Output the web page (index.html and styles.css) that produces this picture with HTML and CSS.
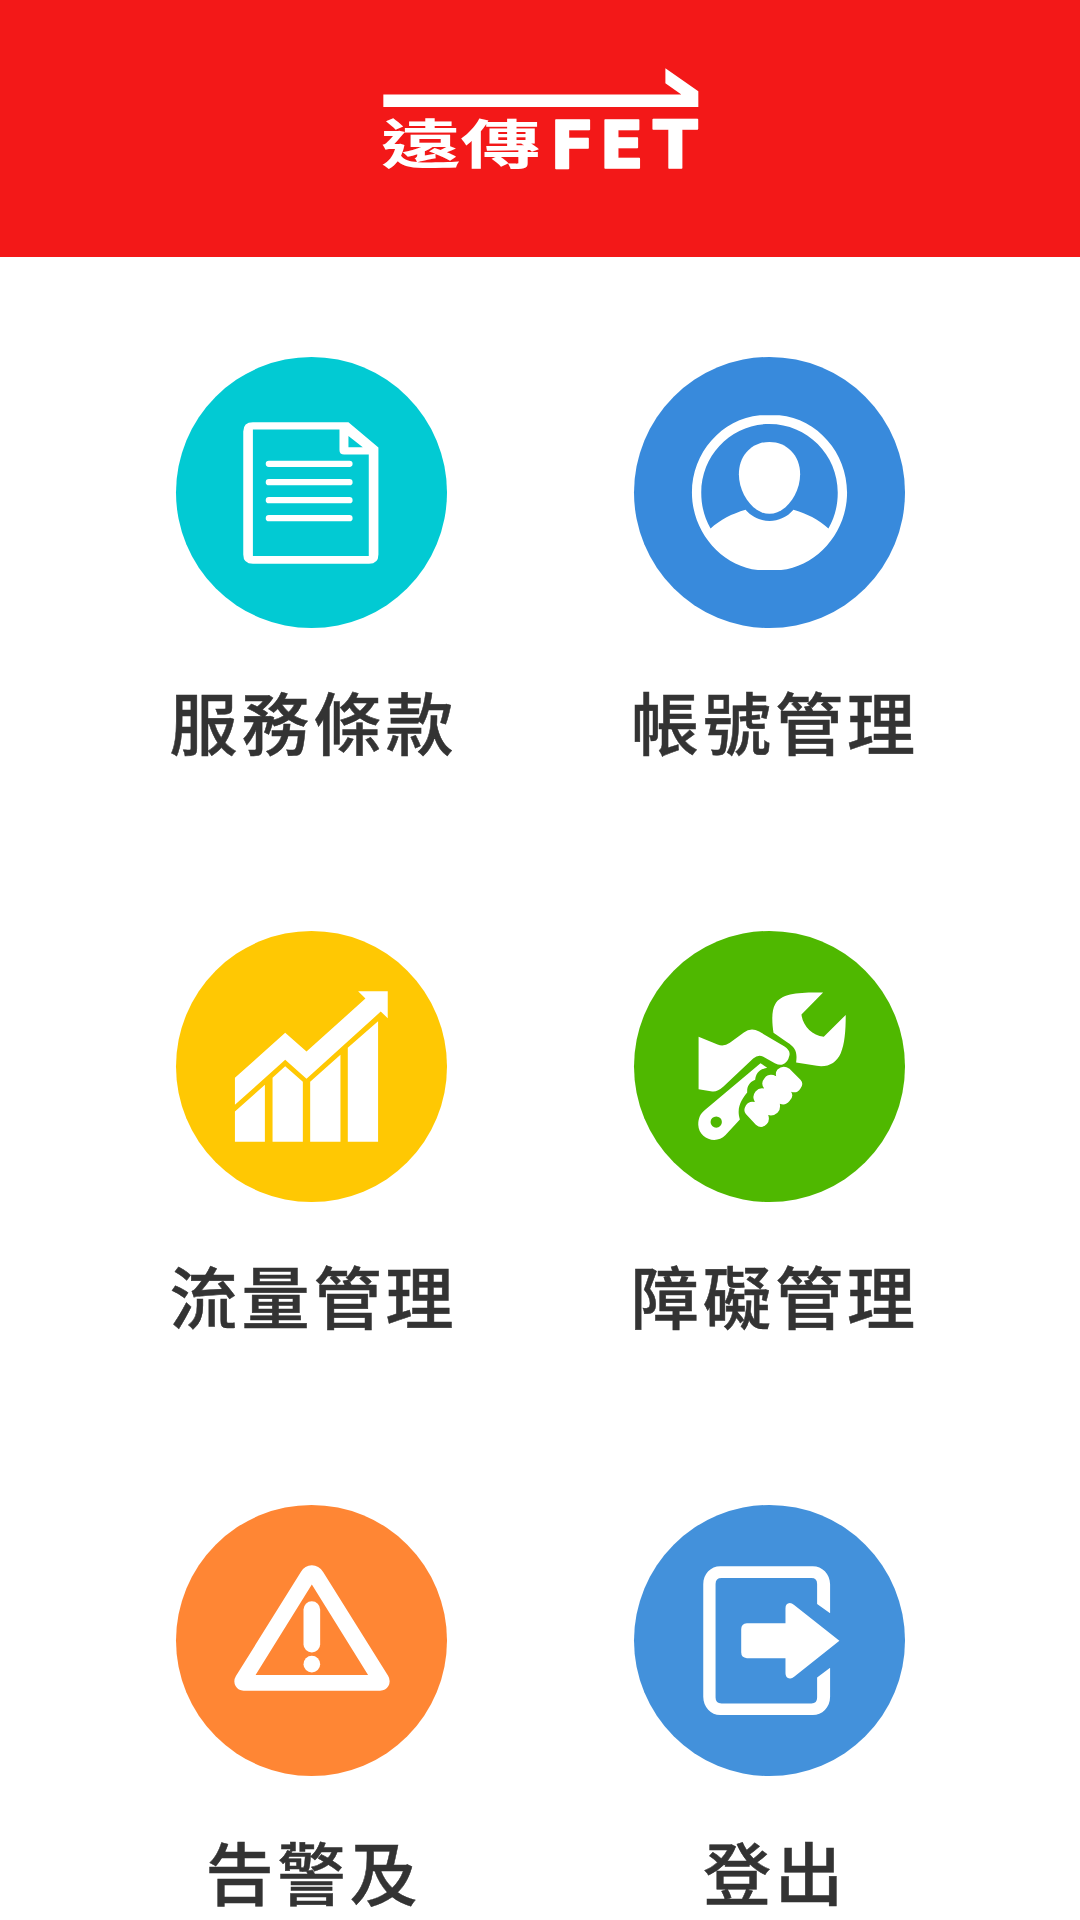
FILE: index.html
```html
<!DOCTYPE html>
<html lang="zh-Hant">
<head>
    <meta charset="UTF-8">
    <meta name="viewport" content="width=device-width, initial-scale=1">
    <title>遠傳 FET</title>
    <link rel="stylesheet" href="styles.css">
</head>
<body>
    <header class="header">
        <svg class="logo" viewBox="60 0 960 460" role="img" aria-label="遠傳 FET">
            <path d="M69 131H965L917 97V52L1016 121V168H69z"/>
            <text class="logo-zh" transform="translate(61 341) scale(1.48 1)" x="0" y="0">遠傳</text>
            <text class="logo-en" x="570 718 880" y="353">FET</text>
        </svg>
    </header>
    <main class="menu">
        <a class="item">
            <svg class="icon terms" viewBox="49 50 814 814">
                <path fill-rule="evenodd" d="M280 246H567L657 322V643Q657 671 629 671H280Q251 671 251 643V274Q251 246 280 246zM280 268V648H628V343H554Q540 343 540 329V268zM567 287V321H610z"/>
                <path class="line" d="M328 371H570M328 426H570M328 480H570M328 534H570"/>
            </svg>
            <span class="label">服務條款</span>
        </a>
        <a class="item">
            <svg class="icon account" viewBox="43 50 814 814">
                <path fill-rule="evenodd" d="M421 225H480C594 236 683 338 683 457S594 678 485 690H415C306 678 217 576 217 457S306 236 421 225zM450 251C337 251 245 343 245 457C245 496 254 533 273 565C302 539 337 521 378 509C416 553 484 554 522 509C561 520 597 538 627 565C646 533 655 496 655 457C655 343 563 251 450 251z"/>
                <path d="M450 305C501 305 542 344 542 402C542 460 499 521 450 521S358 460 358 402C358 344 399 305 450 305z"/>
            </svg>
            <span class="label">帳號管理</span>
        </a>
        <a class="item">
            <svg class="icon traffic" viewBox="49 31 814 814">
                <path d="M226 472L377 337L441 393L618 234L596 212H685V293L664 273L441 475L377 418L226 553z"/>
                <path d="M226 573L316 493V664H226zM339 472L377 437L430 484V664H339zM452 484L543 403V664H452zM565 382L656 302V664H565z"/>
            </svg>
            <span class="label">流量管理</span>
        </a>
        <a class="item">
            <svg class="icon trouble" viewBox="43 31 814 814">
                <g transform="translate(180 150)">
                    <path d="M431 66L366 132C370 166 398 195 433 199L499 133C499 180 496 220 484 248C471 277 446 291 412 286L350 276C354 243 348 231 323 215L282 187C277 155 276 119 287 101C305 67 363 65 431 66z"/>
                    <path d="M57 199L114 222Q133 229 151 217L193 186Q214 170 239 183L314 227Q333 239 330 254Q325 277 309 282Q300 285 286 278L250 258Q236 251 221 264L131 349Q113 365 98 363L57 356z"/>
                    <path fill-rule="evenodd" d="M243 278L263 292C239 296 229 309 227 328C209 336 202 348 203 366C189 384 169 409 181 447L138 494C108 525 57 503 56 463C56 444 62 430 76 419zM110 438A17 17 0 1 0 110 472A17 17 0 1 0 110 438z"/>
                    <path d="M294 297Q311 281 330 295L363 328Q374 340 363 354Q353 370 335 364Q344 379 330 392Q318 407 301 400Q304 418 294 427Q282 438 266 434Q272 449 262 461Q246 477 229 463L199 431Q190 420 199 405Q209 390 226 395Q216 378 228 363Q239 350 254 354Q242 338 255 323Q268 307 290 317Q287 306 294 297z"/>
                </g>
            </svg>
            <span class="label">障礙管理</span>
        </a>
        <a class="item">
            <svg class="icon alert" viewBox="49 44 814 814">
                <path fill-rule="evenodd" d="M424 245Q436 225 457 225T491 245L686 557Q695 572 687 588Q679 602 662 602H252Q236 602 228 588Q220 573 229 558zM457 283L288 555H626z"/>
                <rect x="432" y="333" width="50" height="154" rx="25"/>
                <circle cx="457" cy="522" r="25"/>
            </svg>
            <span class="label">告警及</span>
        </a>
        <a class="item">
            <svg class="icon logout" viewBox="43 44 814 814">
                <path d="M632 369L593 341V281Q593 263 576 263H306Q288 263 288 281V622Q288 640 306 640H576Q593 640 593 622V562L632 533V620C632 653 608 675 580 675H302C274 675 251 651 251 620V282C251 251 274 228 302 228H580C608 228 632 251 632 282z"/>
                <path d="M382 399H498V354Q498 339 511 338Q517 338 524 344L660 452L524 560Q517 566 511 565Q498 563 498 549V504H382Q365 502 365 486V417Q365 401 382 399z"/>
            </svg>
            <span class="label">登出</span>
        </a>
    </main>
</body>
</html>
```

FILE: styles.css
```css
* {
    box-sizing: border-box;
}
html, body {
    height: 100%;
    margin: 0;
    padding: 0;
}
body {
    background: #fff;
    color: #333;
    font-family: "Noto Sans CJK TC", sans-serif;
}
.header {
    height: 257px;
    padding-top: 51px;
    background: #f31818;
    display: flex;
    justify-content: center;
    align-items: flex-start;
}
.logo {
    width: 320px;
    height: 153px;
    fill: #fff;
}
.logo-zh {
    font-family: "Noto Sans CJK TC", sans-serif;
    font-size: 162px;
    font-weight: 700;
}
.logo-en {
    font-family: "DejaVu Sans", sans-serif;
    font-size: 197px;
    font-weight: 700;
    stroke: #fff;
    stroke-width: 5px;
    stroke-linejoin: round;
}
.menu {
    display: grid;
    grid-template-columns: 458px 458px;
    grid-template-rows: 574px 574px auto;
    padding: 100px 0 0 82px;
}
.item {
    display: flex;
    flex-direction: column;
    align-items: center;
}
.icon {
    width: 271px;
    height: 271px;
    flex: none;
    border-radius: 50%;
    fill: #fff;
}
.line {
    fill: none;
    stroke: #fff;
    stroke-width: 19px;
    stroke-linecap: round;
}
.terms {
    background: #02cad3;
}
.account {
    background: #388adc;
}
.traffic {
    background: #ffc803;
}
.trouble {
    background: #4fb800;
}
.alert {
    background: #ff8634;
}
.logout {
    background: #4391db;
}
.label {
    margin-top: 44px;
    padding-left: 5px;
    font-size: 68px;
    line-height: 98px;
    letter-spacing: 4px;
    font-weight: 500;
    white-space: nowrap;
    -webkit-text-stroke: 0.5px #333;
}
/* right column captions sit a little further out */
.item:nth-child(even) .label {
    padding-left: 12px;
}
.item:nth-child(n+5) .label {
    margin-top: 47px;
    line-height: 96px;
}
```
